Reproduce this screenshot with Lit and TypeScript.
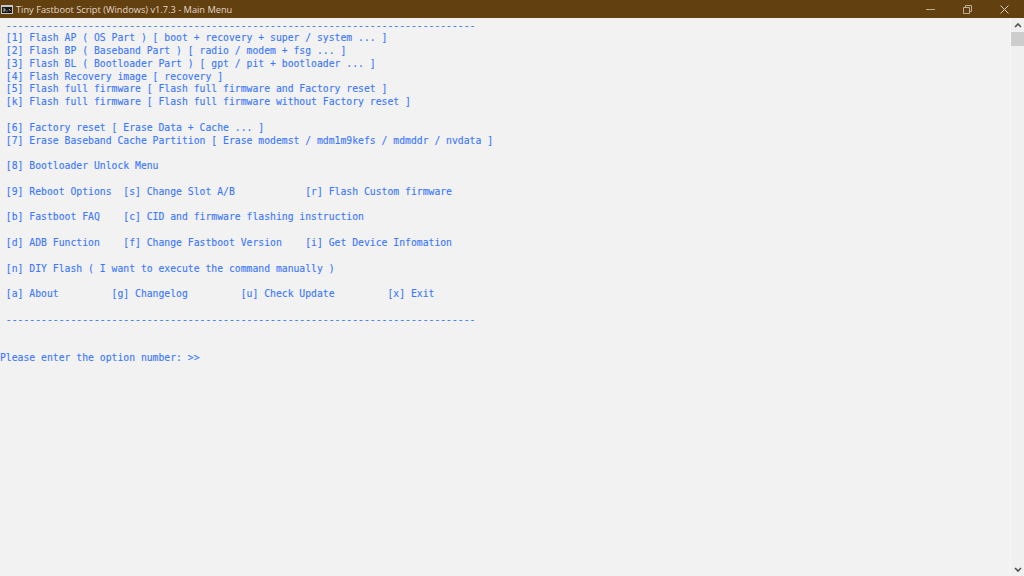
import { LitElement, html, css } from "lit";
import { customElement } from "lit/decorators.js";

const dash = "-".repeat(80);
const text = ` ${dash}
 [1] Flash AP ( OS Part ) [ boot + recovery + super / system ... ]
 [2] Flash BP ( Baseband Part ) [ radio / modem + fsg ... ]
 [3] Flash BL ( Bootloader Part ) [ gpt / pit + bootloader ... ]
 [4] Flash Recovery image [ recovery ]
 [5] Flash full firmware [ Flash full firmware and Factory reset ]
 [k] Flash full firmware [ Flash full firmware without Factory reset ]

 [6] Factory reset [ Erase Data + Cache ... ]
 [7] Erase Baseband Cache Partition [ Erase modemst / mdm1m9kefs / mdmddr / nvdata ]

 [8] Bootloader Unlock Menu

 [9] Reboot Options  [s] Change Slot A/B            [r] Flash Custom firmware

 [b] Fastboot FAQ    [c] CID and firmware flashing instruction

 [d] ADB Function    [f] Change Fastboot Version    [i] Get Device Infomation

 [n] DIY Flash ( I want to execute the command manually )

 [a] About         [g] Changelog         [u] Check Update         [x] Exit

 ${dash}


Please enter the option number: >>`;

@customElement("app-root")
export class AppRoot extends LitElement {
  static styles = css`
    :host { display: flex; flex-direction: column; width: 1024px; height: 576px; overflow: hidden; background: #f2f2f2; }
    .title { height: 18px; flex: none; background: #63400f; display: flex; align-items: center; color: #e0d6c8; font: 9.25px "Open Sans", sans-serif; }
    .appicon { width: 12px; height: 9px; margin: 0 3px 0 1px; flex: none; }
    .name { flex: 1; white-space: nowrap; }
    .btn { width: 37px; height: 18px; display: flex; align-items: center; justify-content: center; }
    .btn:last-child { margin-right: 1px; }
    .btn svg { width: 9px; height: 9px; }
    .body { flex: 1; display: flex; min-height: 0; }
    pre { flex: 1; margin: 0; padding-top: 1.5px; color: #3b78ff; -webkit-text-stroke: 0.12px #3b78ff; font: 9.76px/12.8px "DejaVu Sans Mono", monospace; white-space: pre; }
    .bar { width: 13px; flex: none; border-left: 1px solid #f8f8f8; background: #f0f0f0; display: flex; flex-direction: column; align-items: stretch; }
    .arrow { height: 14px; flex: none; display: flex; align-items: center; justify-content: center; }
    .arrow svg { width: 8px; height: 5px; }
    .thumb { height: 14px; flex: none; background: #cdcdcd; }
    .space { flex: 1; }
  `;
  render() {
    return html`
      <div class="title">
        <svg class="appicon" viewBox="0 0 12 9"><rect width="12" height="9" fill="#c9c9c9"/><rect x="1" y="2" width="10" height="6" fill="#1a1a1a"/><path d="M2 4h2v2H2M5.5 6h1M8 4l1.5 2" stroke="#ddd" stroke-width=".8" fill="none"/></svg>
        <span class="name">Tiny Fastboot Script (Windows) v1.7.3 - Main Menu</span>
        <div class="btn"><svg viewBox="0 0 9 9"><path d="M0 4.5h9" stroke="#bfae97" fill="none"/></svg></div>
        <div class="btn"><svg viewBox="0 0 9 9"><path d="M.5 2.5h6v6h-6zM2.5 2.5v-2h6v6h-2" stroke="#bfae97" fill="none"/></svg></div>
        <div class="btn"><svg viewBox="0 0 9 9"><path d="M.5.5l8 8M8.5.5l-8 8" stroke="#d8cdbd" fill="none"/></svg></div>
      </div>
      <div class="body">
        <pre>${text}</pre>
        <div class="bar">
          <div class="arrow"><svg viewBox="0 0 8 5"><path d="M1 4l3-3 3 3" stroke="#505050" stroke-width="1.6" fill="none"/></svg></div>
          <div class="thumb"></div>
          <div class="space"></div>
          <div class="arrow"><svg viewBox="0 0 8 5"><path d="M1 1l3 3 3-3" stroke="#505050" stroke-width="1.6" fill="none"/></svg></div>
        </div>
      </div>
    `;
  }
}
